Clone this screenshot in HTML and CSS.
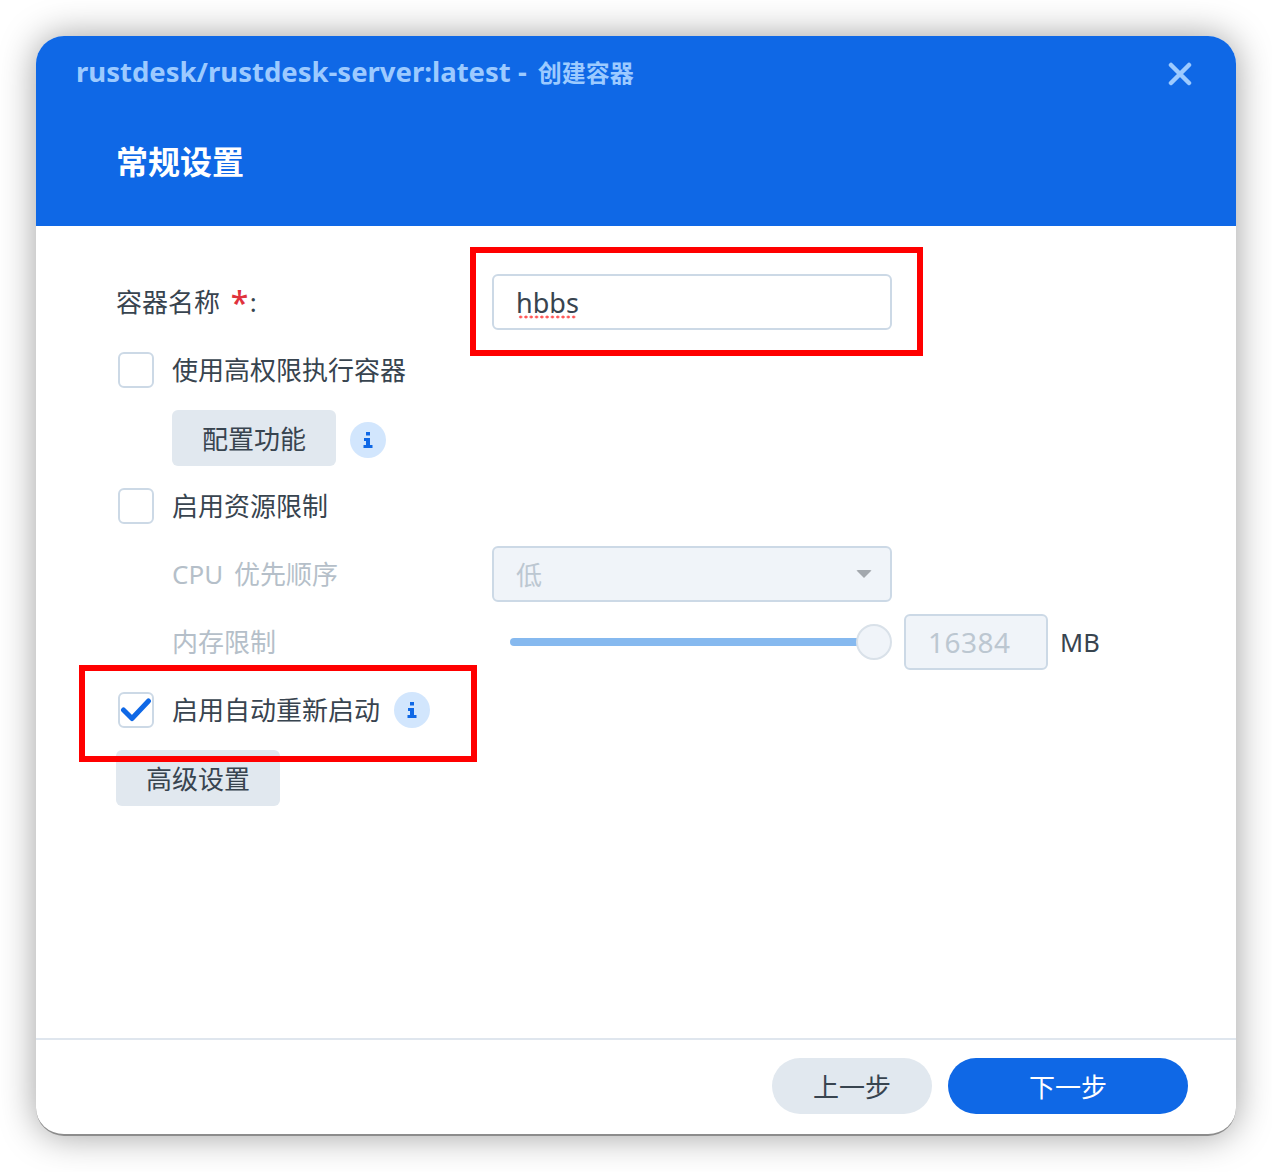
FILE: index.html
```html
<!DOCTYPE html>
<html lang="zh-CN">
<head>
    <meta charset="UTF-8">
    <meta name="viewport" content="width=device-width, initial-scale=1.0">
    <title>创建容器</title>
    <link rel="stylesheet" href="styles.css">
</head>
<body>
    <div class="window">
        <div class="header">
            <div class="title-row">
                <span class="title">rustdesk/rustdesk-server:latest - <span class="title-cjk">创建容器</span></span>
                <svg class="close" width="24" height="24" viewBox="0 0 24 24">
                    <path d="M3 3 L21 21 M21 3 L3 21" />
                </svg>
            </div>
            <h1>常规设置</h1>
        </div>

        <div class="content">
            <div class="row">
                <label class="label">容器名称 <span class="required">*</span>:</label>
                <div class="field field-name"><span class="misspelled">hbbs</span></div>
            </div>

            <div class="row">
                <span class="checkbox"></span>
                <span class="check-label">使用高权限执行容器</span>
            </div>

            <div class="row indent">
                <button class="btn">配置功能</button>
                <span class="info info-low">
                    <svg width="12" height="16" viewBox="0 0 12 16"><path d="M4 0h4v3.500H4zM2 6h6v7h2.500v3h-9v-3H4V9H2z" /></svg>
                </span>
            </div>

            <div class="row">
                <span class="checkbox"></span>
                <span class="check-label">启用资源限制</span>
            </div>

            <div class="row">
                <label class="label disabled sub">CPU 优先顺序</label>
                <div class="field field-disabled select">
                    <span>低</span>
                    <span class="arrow"></span>
                </div>
            </div>

            <div class="row">
                <label class="label disabled sub">内存限制</label>
                <div class="slider">
                    <div class="track"></div>
                    <div class="thumb"></div>
                </div>
                <div class="field field-disabled small">16384</div>
                <span class="unit">MB</span>
            </div>

            <div class="row">
                <span class="checkbox">
                    <svg width="32" height="26" viewBox="0 0 32 26"><path d="M3.500 13 L12 21.500 L28.500 4" /></svg>
                </span>
                <span class="check-label">启用自动重新启动</span>
                <span class="info">
                    <svg width="12" height="16" viewBox="0 0 12 16"><path d="M4 0h4v3.500H4zM2 6h6v7h2.500v3h-9v-3H4V9H2z" /></svg>
                </span>
            </div>

            <div class="row">
                <button class="btn">高级设置</button>
            </div>
        </div>

        <div class="footer">
            <button class="btn-round btn-prev">上一步</button>
            <button class="btn-round btn-next">下一步</button>
        </div>

        <!-- annotation boxes drawn over the dialog -->
        <div class="mark mark-name"></div>
        <div class="mark mark-restart"></div>
    </div>
</body>
</html>
```

FILE: styles.css
```css
* {
    box-sizing: border-box;
}
body {
    margin: 0;
    padding: 36px;
    background-color: #fff;
    font-family: "Noto Sans", "Noto Sans CJK SC", sans-serif;
    color: #38444f;
}
.window {
    position: relative;
    width: 1200px;
    height: 1100px;
    background-color: #fff;
    border-radius: 28px;
    border-bottom: 2px solid #8c8c8c;
    box-shadow: 0 0 36px rgba(0, 0, 0, 0.38);
    display: flex;
    flex-direction: column;
}
.header {
    height: 190px;
    padding: 20px 40px 0;
    background-color: #0f68e6;
    border-radius: 28px 28px 0 0;
}
.title-row {
    display: flex;
    justify-content: space-between;
    align-items: center;
    height: 36px;
}
.title {
    font-size: 27.500px;
    line-height: 32px;
    margin-bottom: 3px;
    font-weight: 700;
    color: #9ccaff;
}
.title-cjk {
    font-size: 24px;
    margin-left: 4px;
}
.close {
    margin-right: 4px;
}
.close path {
    stroke: #9ccaff;
    stroke-width: 4.500;
    stroke-linecap: round;
    fill: none;
}
h1 {
    margin: 47px 0 0 40px;
    font-size: 32px;
    line-height: 46px;
    font-weight: 700;
    color: #fff;
}
.content {
    flex: 1;
    padding: 48px 80px 0;
    display: flex;
    flex-direction: column;
    gap: 12px;
}
.row {
    display: flex;
    align-items: center;
    height: 56px;
}
.indent {
    padding-left: 56px;
}
.label {
    width: 376px;
    font-size: 26px;
    line-height: 34px;
    word-spacing: 4px;
}
.label.sub {
    padding-left: 56px;
}
.disabled {
    color: #b5bfc9;
}
.required {
    display: inline-block;
    width: 19px;
    font-size: 32px;
    line-height: 20px;
    font-weight: 500;
    color: #e0323c;
    vertical-align: -3px;
}
.field {
    width: 400px;
    height: 56px;
    padding: 0 22px;
    display: flex;
    align-items: center;
    font-size: 27px;
    border: 2px solid #ccd9e6;
    border-radius: 6px;
    background-color: #fff;
}
.field-name {
    padding-top: 2px;
}
.misspelled {
    position: relative;
    line-height: 30px;
}
.misspelled::after {
    content: "";
    position: absolute;
    left: 2px;
    right: 2px;
    bottom: -1px;
    height: 4px;
    background-image: radial-gradient(circle, #f55 1.300px, transparent 1.700px);
    background-size: 5.300px 4px;
    background-repeat: repeat-x;
}
.field-disabled {
    background-color: #f0f4f9;
    color: #bcc7d1;
    font-size: 26px;
}
.select {
    justify-content: space-between;
}
.arrow {
    margin-right: -4px;
    border-left: 8px solid transparent;
    border-right: 8px solid transparent;
    border-top: 8px solid #a3a8ae;
    border-radius: 2px;
}
.slider {
    width: 400px;
    height: 36px;
    display: flex;
    align-items: center;
    padding-left: 18px;
}
.track {
    flex: 1;
    height: 8px;
    background-color: #86b9ef;
    border-radius: 4px 0 0 4px;
}
.thumb {
    width: 36px;
    height: 36px;
    margin-left: -1px;
    border: 2px solid #d9e1e9;
    border-radius: 50%;
    background-color: #f0f4f9;
}
.small {
    width: 144px;
    margin-left: 12px;
    padding: 0 22px;
    font-size: 28px;
    letter-spacing: 0.500px;
}
.unit {
    margin-left: 12px;
    font-size: 25.500px;
}
.checkbox {
    width: 36px;
    height: 36px;
    margin-left: 2px;
    border: 2px solid #ccd9e6;
    border-radius: 6px;
    display: flex;
    align-items: center;
    justify-content: center;
    flex-shrink: 0;
}
.checkbox path {
    stroke: #0f68e6;
    stroke-width: 5;
    stroke-linecap: round;
    stroke-linejoin: round;
    fill: none;
}
.check-label {
    margin-left: 18px;
    font-size: 26px;
    line-height: 34px;
}
.btn {
    width: 164px;
    height: 56px;
    padding: 0;
    border: none;
    border-radius: 6px;
    background-color: #e1e8ef;
    color: #38444f;
    font-family: inherit;
    font-size: 26px;
}
.info {
    width: 36px;
    height: 36px;
    margin-left: 14px;
    border-radius: 50%;
    background-color: #d2e6fd;
    display: flex;
    align-items: center;
    justify-content: center;
}
.info-low {
    margin-top: 4px;
}
.info path {
    fill: #0f68e6;
}
.footer {
    height: 96px;
    padding: 18px 48px 0 0;
    border-top: 2px solid #dfe6ee;
    display: flex;
    justify-content: flex-end;
    gap: 16px;
}
.btn-round {
    height: 56px;
    border: none;
    border-radius: 28px;
    font-family: inherit;
    font-size: 26px;
}
.btn-prev {
    width: 160px;
    background-color: #e1e8ef;
    color: #38444f;
}
.btn-next {
    width: 240px;
    background-color: #0f68e6;
    color: #fff;
}
.mark {
    position: absolute;
    border: 6px solid #ff0000;
}
.mark-name {
    left: 434px;
    top: 211px;
    width: 453px;
    height: 109px;
}
.mark-restart {
    left: 43px;
    top: 629px;
    width: 398px;
    height: 97px;
}
```
